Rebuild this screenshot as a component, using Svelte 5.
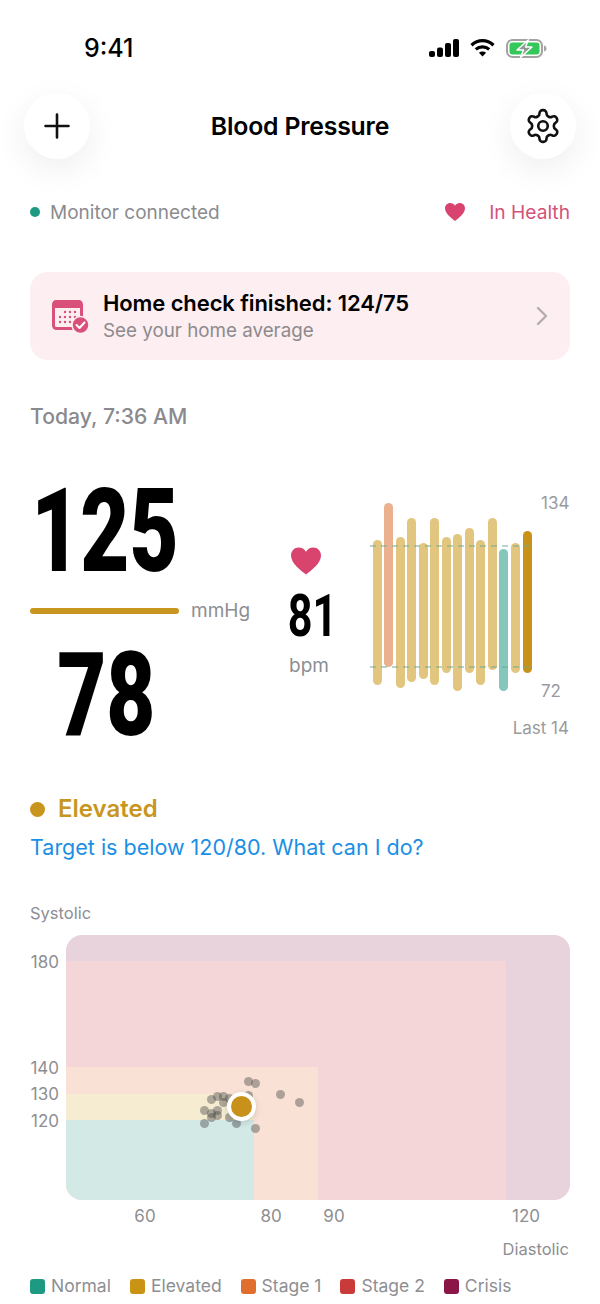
<script>
	const bars = [
		{ top: 540, bottom: 685, tone: 'elevated' },
		{ top: 503, bottom: 667, tone: 'stage1' },
		{ top: 537, bottom: 688, tone: 'elevated' },
		{ top: 518, bottom: 682, tone: 'elevated' },
		{ top: 543, bottom: 679, tone: 'elevated' },
		{ top: 518, bottom: 685, tone: 'elevated' },
		{ top: 537, bottom: 673, tone: 'elevated' },
		{ top: 534, bottom: 691, tone: 'elevated' },
		{ top: 528, bottom: 673, tone: 'elevated' },
		{ top: 540, bottom: 685, tone: 'elevated' },
		{ top: 518, bottom: 670, tone: 'elevated' },
		{ top: 549, bottom: 691, tone: 'normal' },
		{ top: 543, bottom: 673, tone: 'elevated' },
		{ top: 531, bottom: 673, tone: 'current' }
	];

	// page coordinates of the earlier readings
	const readings = [
		[248, 1081], [255, 1083], [280, 1094], [299, 1102], [211, 1099], [217, 1096],
		[223, 1096], [223, 1102], [229, 1098], [204, 1110], [211, 1113], [217, 1110],
		[217, 1115], [211, 1117], [204, 1123], [229, 1117], [236, 1123], [255, 1128], [248, 1095]
	];

	const yTicks = [
		{ label: '180', y: 962 },
		{ label: '140', y: 1068 },
		{ label: '130', y: 1094 },
		{ label: '120', y: 1121 }
	];
	const xTicks = [
		{ label: '60', x: 145 },
		{ label: '80', x: 271 },
		{ label: '90', x: 334 },
		{ label: '120', x: 526 }
	];
	const legend = [
		{ label: 'Normal', color: '#1f9a82' },
		{ label: 'Elevated', color: '#c99414' },
		{ label: 'Stage 1', color: '#e06f2f' },
		{ label: 'Stage 2', color: '#c93a38' },
		{ label: 'Crisis', color: '#8c1547' }
	];
</script>

<main class="screen">
	<div class="status-bar">
		<span class="clock">9:41</span>
		<div class="status-icons">
			<svg width="30" height="18" viewBox="0 0 30 18" fill="#000">
				<rect x="0" y="12" width="6" height="6" rx="2" />
				<rect x="8" y="8.5" width="6" height="9.5" rx="2" />
				<rect x="16" y="4" width="6" height="14" rx="2" />
				<rect x="24" y="0" width="6" height="18" rx="2" />
			</svg>
			<svg width="25" height="18" viewBox="0 0 25 18" fill="none" stroke="#000" stroke-width="3.2">
				<path d="M1.5 6.2C8 .2 17 .2 23.5 6.2" />
				<path d="M5.8 10.4c3.8-3.4 9.6-3.4 13.4 0" />
				<path d="M12.5 17.6 8.9 13.8c2-1.6 5.2-1.6 7.2 0z" fill="#000" stroke="none" />
			</svg>
			<svg width="41" height="19" viewBox="0 0 41 19">
				<rect x="1" y="1" width="35" height="17" rx="5.5" fill="#fff" stroke="#a3a3a3" stroke-width="2" />
				<rect x="3.5" y="3.5" width="30" height="12" rx="3" fill="#34c759" />
				<path d="M38 6.5c1.6.4 2.5 1.5 2.5 3s-.9 2.6-2.5 3z" fill="#a5a5a5" />
				<path d="M22.5 .8 11 11h6.5L14.5 18.500 26 8h-6.5z" fill="#8f9a92" stroke="#fff" stroke-width="1.4" stroke-linejoin="round" />
			</svg>
		</div>
	</div>

	<header class="nav">
		<button class="round" aria-label="Add">
			<svg width="30" height="30" viewBox="0 0 30 30" stroke="#111" stroke-width="2.6" stroke-linecap="round">
				<path d="M15 3.5v23M3.5 15h23" />
			</svg>
		</button>
		<h1>Blood Pressure</h1>
		<button class="round" aria-label="Settings">
			<svg width="38" height="38" viewBox="0 0 24 24" fill="none" stroke="#111" stroke-width="1.65" stroke-linejoin="round">
				<path d="M12.22 2h-.44a2 2 0 0 0-2 2v.18a2 2 0 0 1-1 1.73l-.43.25a2 2 0 0 1-2 0l-.15-.08a2 2 0 0 0-2.73.73l-.22.38a2 2 0 0 0 .73 2.73l.15.1a2 2 0 0 1 1 1.72v.51a2 2 0 0 1-1 1.74l-.15.09a2 2 0 0 0-.73 2.73l.22.38a2 2 0 0 0 2.73.73l.15-.08a2 2 0 0 1 2 0l.43.25a2 2 0 0 1 1 1.73V20a2 2 0 0 0 2 2h.44a2 2 0 0 0 2-2v-.18a2 2 0 0 1 1-1.73l.43-.25a2 2 0 0 1 2 0l.15.08a2 2 0 0 0 2.73-.73l.22-.39a2 2 0 0 0-.73-2.73l-.15-.08a2 2 0 0 1-1-1.74v-.5a2 2 0 0 1 1-1.74l.15-.09a2 2 0 0 0 .73-2.73l-.22-.38a2 2 0 0 0-2.73-.73l-.15.08a2 2 0 0 1-2 0l-.43-.25a2 2 0 0 1-1-1.73V4a2 2 0 0 0-2-2z" />
				<circle cx="12" cy="12" r="3" />
			</svg>
		</button>
	</header>

	<div class="connection">
		<div class="monitor"><i class="dot-green"></i>Monitor connected</div>
		<div class="health">
			<svg width="20" height="18" viewBox="0 0 20 18" fill="#d9446f">
				<path d="M10 18C7 15.5 0 10.8 0 5.3 0 2.3 2.3 0 5.2 0 7.2 0 9 1 10 2.8 11 1 12.8 0 14.8 0 17.7 0 20 2.3 20 5.3 20 10.8 13 15.5 10 18z" />
			</svg>
			<span>In Health</span>
		</div>
	</div>

	<section class="notice">
		<svg class="notice-icon" width="37" height="35" viewBox="0 0 37 35">
			<rect x="1.5" y="2.5" width="28" height="27" rx="3" fill="#fceef1" stroke="#d9507a" stroke-width="3" />
			<path d="M1 9V5a4 4 0 0 1 4-4h21a4 4 0 0 1 4 4v4z" fill="#d9507a" />
			<g fill="#d9507a">
				<circle cx="13" cy="13" r="1.2" /><circle cx="18" cy="13" r="1.2" /><circle cx="23" cy="13" r="1.2" />
				<circle cx="8" cy="18" r="1.2" /><circle cx="13" cy="18" r="1.2" /><circle cx="18" cy="18" r="1.2" /><circle cx="23" cy="18" r="1.2" />
				<circle cx="8" cy="23" r="1.2" /><circle cx="13" cy="23" r="1.2" /><circle cx="18" cy="23" r="1.2" />
			</g>
			<circle cx="28.5" cy="26" r="8.5" fill="#d9507a" stroke="#fceef1" stroke-width="1.5" />
			<path d="M24.5 26l3 3 5-5.5" fill="none" stroke="#fff" stroke-width="2" stroke-linecap="round" stroke-linejoin="round" />
		</svg>
		<div class="notice-text">
			<strong>Home check finished: 124/75</strong>
			<span>See your home average</span>
		</div>
		<svg class="chevron" width="12" height="20" viewBox="0 0 12 20" fill="none" stroke="#b4adb0" stroke-width="2.4" stroke-linecap="round" stroke-linejoin="round">
			<path d="M2 2l8 8-8 8" />
		</svg>
	</section>

	<p class="when">Today, 7:36 AM</p>

	<section class="reading">
		<div class="pressure">
			<div class="big sys"><span>125</span></div>
			<div class="rule-row"><i class="rule"></i><span class="unit">mmHg</span></div>
			<div class="big dia"><span>78</span></div>
		</div>

		<div class="pulse">
			<svg width="30" height="28" viewBox="0 0 20 18" fill="#d9446f">
				<path d="M10 18C7 15.5 0 10.8 0 5.3 0 2.3 2.3 0 5.2 0 7.2 0 9 1 10 2.8 11 1 12.8 0 14.8 0 17.7 0 20 2.3 20 5.3 20 10.8 13 15.5 10 18z" />
			</svg>
			<div class="bpm-value"><span>81</span></div>
			<div class="unit">bpm</div>
		</div>

		<div class="history">
			<div class="bars">
				{#each bars as bar, i}
					<i
						class="bar {bar.tone}"
						style="left: {7 + i * 11.54 - 4.5}px; top: {bar.top - 494}px; height: {bar.bottom - bar.top}px"
					></i>
				{/each}
				<i class="dash upper"></i>
				<i class="dash lower"></i>
				<span class="range high">134</span>
				<span class="range low">72</span>
				<span class="range last">Last 14</span>
			</div>
		</div>
	</section>

	<div class="category"><i class="dot-elevated"></i>Elevated</div>
	<p class="target">Target is below 120/80. What can I do?</p>

	<section class="chart">
		<div class="axis-title">Systolic</div>
		<div class="plot">
			<div class="zones">
				<div class="zone stage2"></div>
				<div class="zone stage1z"></div>
				<div class="zone elevatedz"></div>
				<div class="zone normalz"></div>
			</div>
			{#each readings as [x, y]}
				<i class="reading-dot" style="left: {x - 66 - 4.5}px; top: {y - 935 - 4.5}px"></i>
			{/each}
			<i class="latest"></i>
			{#each yTicks as tick}
				<span class="tick y-tick" style="top: {tick.y - 935 - 10}px">{tick.label}</span>
			{/each}
			{#each xTicks as tick}
				<span class="tick x-tick" style="left: {tick.x - 66 - 20}px">{tick.label}</span>
			{/each}
		</div>
		<div class="axis-x">Diastolic</div>
		<div class="legend">
			{#each legend as item}
				<div class="legend-item">
					<i style="background: {item.color}"></i>{item.label}
				</div>
			{/each}
		</div>
	</section>
</main>

<style>
	:global(body) {
		margin: 0;
		background: #fff;
	}
	.screen {
		width: 600px;
		height: 1304px;
		overflow: hidden;
		position: relative;
		background: #fff;
		font-family: Inter, 'Liberation Sans', sans-serif;
		color: #000;
	}
	i {
		display: block;
	}
	.status-bar {
		display: flex;
		justify-content: space-between;
		align-items: center;
		height: 30px;
		padding: 33px 53px 0 84px;
	}
	.clock {
		font-size: 25px;
		font-weight: 500;
		line-height: 30px;
	}
	.status-icons {
		display: flex;
		align-items: center;
		gap: 11px;
	}
	.nav {
		display: flex;
		justify-content: space-between;
		align-items: center;
		padding: 30px 24px 0;
	}
	.nav h1 {
		margin: 0;
		font-size: 24.8px;
		font-weight: 600;
		letter-spacing: -0.2px;
	}
	.round {
		width: 66px;
		height: 66px;
		padding: 0;
		border: 0;
		border-radius: 50%;
		background: #fff;
		box-shadow: 0 10px 34px rgba(0, 0, 0, 0.07);
		display: flex;
		align-items: center;
		justify-content: center;
	}
	.connection {
		display: flex;
		justify-content: space-between;
		align-items: center;
		padding: 40px 30px 0 30px;
		height: 26px;
		font-size: 19px;
	}
	.monitor {
		display: flex;
		align-items: center;
		gap: 10px;
		color: #8b8b8f;
	}
	.dot-green {
		width: 10px;
		height: 10px;
		border-radius: 50%;
		background: #1f9a82;
	}
	.health {
		display: flex;
		align-items: center;
		gap: 24px;
		color: #d4527b;
	}
	.health span {
		font-size: 19.2px;
	}
	.notice {
		display: flex;
		align-items: center;
		margin: 47px 30px 0;
		height: 88px;
		padding: 0 22px;
		box-sizing: border-box;
		border-radius: 18px;
		background: #fceef1;
	}
	.notice-icon {
		flex: none;
		margin-right: 14px;
	}
	.notice-text {
		flex: 1;
		display: flex;
		flex-direction: column;
		gap: 3px;
	}
	.notice-text strong {
		font-size: 22px;
		font-weight: 600;
		line-height: 26px;
		letter-spacing: -0.1px;
	}
	.notice-text span {
		font-size: 18.8px;
		line-height: 24px;
		color: #8d8a8d;
	}
	.when {
		margin: 42px 30px 0;
		font-size: 21.2px;
		line-height: 28px;
		font-weight: 500;
		color: #8a8a8e;
	}
	.reading {
		display: flex;
		margin-top: 45px;
		padding-left: 30px;
		height: 319px;
	}
	.pressure {
		width: 259px;
		flex: none;
	}
	.big {
		width: 149px;
		height: 111px;
		display: flex;
		justify-content: center;
		font-family: Roboto, sans-serif;
		font-weight: 900;
		font-size: 116px;
	}
	.big span {
		display: inline-block;
		transform: scaleX(0.73);
	}
	.sys {
		line-height: 113px;
	}
	.dia {
		line-height: 117px;
		margin-left: 2px;
	}
	.rule-row {
		display: flex;
		align-items: center;
		gap: 12px;
		height: 52px;
		margin-top: -1px;
	}
	.rule {
		width: 149px;
		height: 6px;
		border-radius: 3px;
		background: #c8961e;
	}
	.unit {
		font-size: 19px;
		line-height: 24px;
		color: #8e8e93;
	}
	.pulse {
		width: 82px;
		flex: none;
		padding-top: 72px;
	}
	.pulse svg {
		display: block;
		margin-left: 2px;
	}
	.bpm-value {
		width: 46px;
		height: 58px;
		display: flex;
		justify-content: center;
		font-family: Roboto, sans-serif;
		font-weight: 700;
		font-size: 60px;
		line-height: 58px;
		margin-top: 12px;
	}
	.bpm-value span {
		display: inline-block;
		transform: scaleX(0.72);
	}
	.pulse .unit {
		margin-top: 9px;
	}
	.history {
		flex: 1;
		padding-top: 19px;
	}
	.bars {
		position: relative;
		height: 250px;
		margin-left: -1px;
	}
	.bar {
		position: absolute;
		width: 9px;
		border-radius: 4.5px;
	}
	.bar.elevated { background: #e2c57e; }
	.bar.stage1 { background: #ebb08e; }
	.bar.normal { background: #85c7bb; }
	.bar.current { background: #c8921a; }
	.dash {
		position: absolute;
		left: 0;
		width: 164px;
		height: 2px;
		background: repeating-linear-gradient(90deg, rgba(110, 170, 145, 0.5) 0 6px, transparent 6px 11px);
	}
	.dash.upper { top: 51px; }
	.dash.lower { top: 172px; }
	.range {
		position: absolute;
		font-size: 17px;
		line-height: 20px;
		color: #9a9a9e;
	}
	.range.high { left: 171px; top: -1px; }
	.range.low { left: 171px; top: 187px; }
	.range.last { right: 31px; top: 224px; font-size: 17px; white-space: nowrap; }
	.category {
		display: flex;
		align-items: center;
		gap: 13px;
		margin: 0 30px;
		font-size: 24px;
		line-height: 30px;
		font-weight: 600;
		color: #c8961e;
	}
	.dot-elevated {
		width: 15px;
		height: 15px;
		border-radius: 50%;
		background: #c8961e;
	}
	.target {
		margin: 8px 30px 0;
		font-size: 21.5px;
		line-height: 30px;
		color: #1a8fe3;
	}
	.chart {
		margin-top: 41px;
	}
	.axis-title {
		margin-left: 30px;
		font-size: 16.5px;
		line-height: 20px;
		color: #8e8e93;
	}
	.plot {
		position: relative;
		margin: 12px 0 0 66px;
		width: 504px;
		height: 265px;
	}
	.zones {
		position: absolute;
		inset: 0;
		overflow: hidden;
		border-radius: 16px;
		background: #e8d2dc;
	}
	.zone {
		position: absolute;
		left: 0;
		bottom: 0;
	}
	.stage2 { width: 440px; height: 239px; background: #f4d6d8; }
	.stage1z { width: 252px; height: 133px; background: #f9e2d5; }
	.elevatedz { width: 188px; height: 106px; background: #f5ecd2; }
	.normalz { width: 188px; height: 80px; background: #d3e9e5; }
	.reading-dot {
		position: absolute;
		width: 9px;
		height: 9px;
		border-radius: 50%;
		background: rgba(70, 70, 70, 0.42);
	}
	.latest {
		position: absolute;
		left: 161px;
		top: 157px;
		width: 21px;
		height: 21px;
		border: 4.5px solid #fff;
		border-radius: 50%;
		background: #c8921a;
		box-shadow: 0 2px 6px rgba(0, 0, 0, 0.15);
	}
	.tick {
		position: absolute;
		font-size: 17px;
		line-height: 20px;
		color: #8e8e93;
	}
	.y-tick {
		right: 511px;
	}
	.x-tick {
		top: 271px;
		width: 40px;
		text-align: center;
	}
	.axis-x {
		margin: 39px 31px 0 0;
		text-align: right;
		font-size: 16.5px;
		line-height: 20px;
		color: #8e8e93;
	}
	.legend {
		display: flex;
		gap: 19px;
		margin: 16px 0 0 30px;
	}
	.legend-item {
		display: flex;
		align-items: center;
		gap: 6px;
		font-size: 17.5px;
		line-height: 22px;
		color: #8e8e93;
	}
	.legend-item i {
		width: 15px;
		height: 15px;
		border-radius: 3px;
	}
</style>
